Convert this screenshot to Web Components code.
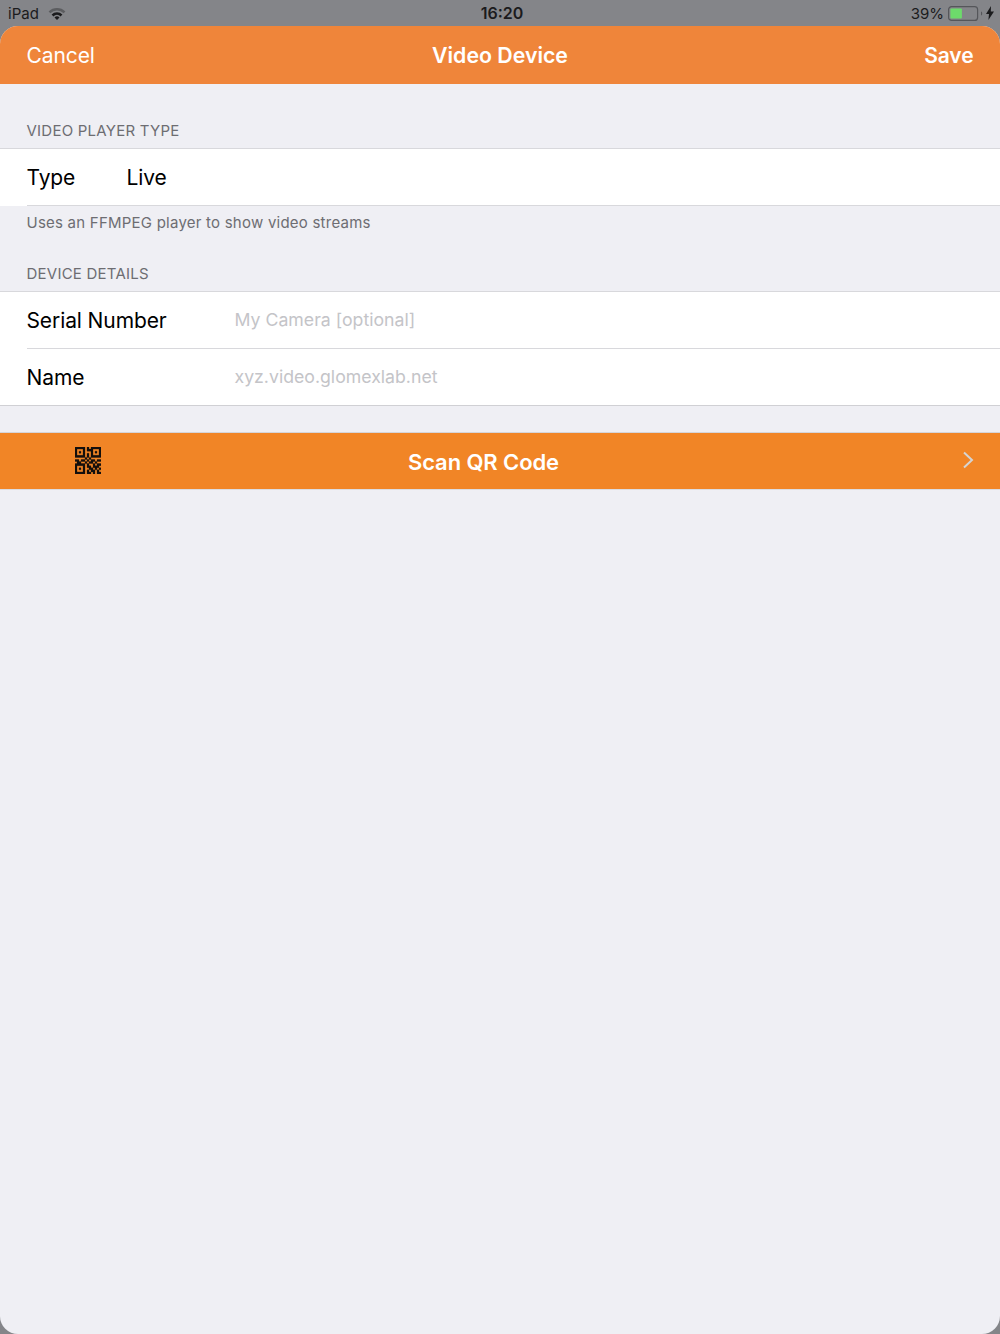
<!DOCTYPE html>
<html><head><meta charset="utf-8">
<style>
html,body{margin:0;padding:0;background:#848589}
body{width:1000px;height:1334px;overflow:hidden;font-family:Inter,"Liberation Sans",sans-serif}
</style></head><body>
<ipad-screen>
<status-bar slot="status"></status-bar>
<nav-bar slot="nav" left="Cancel" title="Video Device" right="Save"></nav-bar>
<section-head>VIDEO PLAYER TYPE</section-head>
<form-group>
  <form-row label="Type" value="Live" label-width="100"></form-row>
</form-group>
<section-foot>Uses an FFMPEG player to show video streams</section-foot>
<section-head second>DEVICE DETAILS</section-head>
<form-group>
  <form-row label="Serial Number" placeholder="My Camera [optional]" label-width="208"></form-row>
  <form-row label="Name" placeholder="xyz.video.glomexlab.net" label-width="208" last></form-row>
</form-group>
<scan-button>Scan QR Code</scan-button>
</ipad-screen>
<script>
function def(name, html, init){
  customElements.define(name, class extends HTMLElement{
    constructor(){super();this.attachShadow({mode:'open'}).innerHTML=html;}
    connectedCallback(){ if(init) init(this,this.shadowRoot); }
  });
}
def('ipad-screen',`<style>
:host{display:flex;flex-direction:column;width:1000px;height:1334px;background:#848589}
.sheet{flex:1;display:flex;flex-direction:column;background:#efeff4;border-radius:18px;overflow:hidden}
</style><slot name="status"></slot><div class="sheet"><slot name="nav"></slot><slot></slot></div>`);

def('status-bar',`<style>
:host{display:flex;align-items:center;justify-content:space-between;height:26px;padding:0 6px 0 8px;box-sizing:border-box;color:#1b1b1d;font-size:15px;position:relative}
.l,.r{display:flex;align-items:center}
.l{gap:9px}
.t{position:absolute;left:0;right:0;text-align:center;font-weight:600;font-size:16px;padding-left:4px;box-sizing:border-box}
svg{display:block}
</style>
<div class="l"><span>iPad</span>
<svg width="18" height="13" viewBox="0 0 18 13"><path d="M.6 4.4A12 12 0 0 1 17.4 4.4L15.6 6.3A9.4 9.4 0 0 0 2.4 6.3Z" fill="#5c5d60"/><path d="M3.6 7.6A7.6 7.6 0 0 1 14.4 7.6L12.6 9.4A5 5 0 0 0 5.4 9.4Z" fill="#1b1b1d"/><path d="M6.5 10.5A3.6 3.6 0 0 1 11.5 10.5L9 13Z" fill="#1b1b1d"/></svg></div>
<div class="t">16:20</div>
<div class="r"><span style="margin-right:4px">39%</span>
<svg width="35" height="15" viewBox="0 0 35 15"><rect x=".6" y=".6" width="29" height="13.8" rx="3" fill="none" stroke="#55565a" stroke-width="1.2"/><rect x="2.4" y="2.6" width="11.5" height="9.8" rx="1" fill="#6ddb6b"/><path d="M33 5.4c.9.3 1.2 1 1.2 2.1s-.3 1.8-1.2 2.1z" fill="#55565a"/></svg>
<svg style="margin-left:3px" width="8" height="14" viewBox="0 0 8 14"><path d="M5 0 0 8h3L2.4 14 8 5.6H4.8Z" fill="#1b1b1d"/></svg></div>`);

def('nav-bar',`<style>
:host{display:flex;align-items:center;justify-content:space-between;height:58px;padding:0 26.5px;box-sizing:border-box;background:#ef853a;color:#fff;font-size:21px;position:relative;letter-spacing:-.1px}
.c{position:absolute;left:0;right:0;text-align:center;font-weight:600;font-size:21.3px;letter-spacing:0}
.s{font-weight:600}
span{position:relative}
</style><span id="a"></span><div class="c" id="b"></div><span class="s" id="d"></span>`,(h,s)=>{
 s.getElementById('a').textContent=h.getAttribute('left');
 s.getElementById('b').textContent=h.getAttribute('title');
 s.getElementById('d').textContent=h.getAttribute('right');
});

def('section-head',`<style>
:host{display:block;padding:38px 26.5px 8px;font-size:15px;letter-spacing:.23px;line-height:18px;color:#6d6d72}
:host([second]){padding-top:33px}
</style><slot></slot>`);

def('section-foot',`<style>
:host{display:block;padding:8px 26.5px 0;font-size:15px;letter-spacing:.23px;line-height:18px;color:#6d6d72}
</style><slot></slot>`);

def('form-group',`<style>
:host{display:block;background:#fff;border-top:1px solid #d8d8dc}
</style><slot></slot>`);

def('form-row',`<style>
:host{display:block;background:#fff}
.w{margin-left:26.5px;height:56px;display:flex;align-items:center;border-bottom:1px solid #d8d8dc;font-size:21px;color:#000;letter-spacing:-.1px}
:host([last]) .w{margin-left:0;padding-left:26.5px;border-bottom-color:#d0d0d4}
.p{color:#c4c4c8;font-size:17.7px;letter-spacing:0;position:relative;top:-.5px}
</style><div class="w"><span id="l"></span><span id="v"></span></div>`,(h,s)=>{
 const l=s.getElementById('l'),v=s.getElementById('v');
 l.textContent=h.getAttribute('label');
 l.style.width=h.getAttribute('label-width')+'px';
 if(h.hasAttribute('value'))v.textContent=h.getAttribute('value');
 else{v.textContent=h.getAttribute('placeholder');v.className='p';}
});

const qr=()=>{
 const m=[
 "1111101011111",
 "1000101110001",
 "1010100010101",
 "1000101010001",
 "1111101011111",
 "0000010100000",
 "1101101011011",
 "0110010110100",
 "1111101001011",
 "1000101101110",
 "1010100110101",
 "1000101011010",
 "1111101101011"];
 let d='';
 m.forEach((r,y)=>[...r].forEach((c,x)=>{if(c==='1')d+=`M${x} ${y}h1v1h-1z`;}));
 return `<svg width="26" height="27" viewBox="0 0 13 13" preserveAspectRatio="none"><path d="${d}" fill="#15120e" stroke="#15120e" stroke-width=".14"/></svg>`;
};
def('scan-button',`<style>
:host{display:flex;align-items:center;height:58px;box-sizing:border-box;margin-top:26px;background:#f18526;border-top:1px solid #d5d5d9;border-bottom:1px solid #dcdce0;color:#fff;font-weight:600;font-size:22px;letter-spacing:-.1px;position:relative}
.i{margin-left:75px;margin-top:-2px;display:flex}
.t{position:absolute;left:0;width:967px;text-align:center;padding-top:1px}
.c{position:absolute;left:962px;top:18px}
</style><div class="i">${qr()}</div><div class="t"><slot></slot></div>
<svg class="c" width="12" height="18" viewBox="0 0 12 18"><path d="M2 1.5 10 9 2 16.5" fill="none" stroke="#d4d4d4" stroke-width="2"/></svg>`);
</script>
</body></html>
